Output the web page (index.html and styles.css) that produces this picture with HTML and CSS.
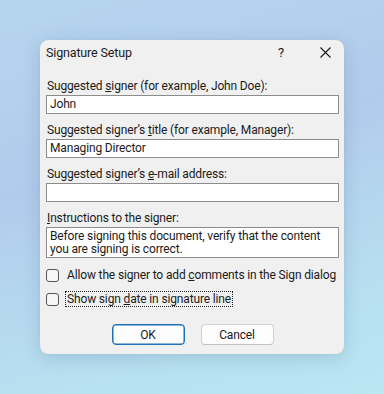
FILE: index.html
```html
<!DOCTYPE html>
<html lang="en">
<head>
<meta charset="utf-8">
<title>Signature Setup</title>
<link rel="stylesheet" href="styles.css">
</head>
<body>
<div class="stage">
  <div class="dialog">
    <div class="titlebar">
      <span class="title">Signature Setup</span>
      <span class="help">?</span>
      <span class="close">
        <svg width="11" height="11" viewBox="0 0 11 11"><path d="M0.5 0.5 L10.5 10.5 M10.5 0.5 L0.5 10.5" stroke="#1a1a1a" stroke-width="1.1" fill="none"/></svg>
      </span>
    </div>
    <div class="form">
      <div class="field">
        <div class="label">Suggested <u>s</u>igner (for example, John Doe):</div>
        <div class="input">John</div>
      </div>
      <div class="field">
        <div class="label">Suggested signer’s <u>t</u>itle (for example, Manager):</div>
        <div class="input">Managing Director</div>
      </div>
      <div class="field">
        <div class="label">Suggested signer’s <u>e</u>-mail address:</div>
        <div class="input"></div>
      </div>
      <div class="field">
        <div class="label"><u>I</u>nstructions to the signer:</div>
        <div class="input textarea">Before signing this document, verify that the content you are signing is correct.</div>
      </div>
      <div class="checks">
        <div class="check"><span class="box"></span><span class="ctext">Allow the signer to add <u>c</u>omments in the Sign dialog</span></div>
        <div class="check"><span class="box"></span><span class="ctext focus">Show sign <u>d</u>ate in signature line</span></div>
      </div>
      <div class="buttons">
        <div class="btn primary">OK</div>
        <div class="btn">Cancel</div>
      </div>
    </div>
  </div>
</div>
</body>
</html>
```
FILE: styles.css
```css
html, body {
  margin: 0;
  padding: 0;
}
body {
  width: 384px;
  height: 394px;
  overflow: hidden;
  font-family: Roboto, "Noto Sans", sans-serif;
  font-size: 12px;
  letter-spacing: -0.15px;
  color: #1b1b1b;
  background: linear-gradient(165deg, #b6d5ee 0%, #b1cbec 40%, #b7def0 75%, #b9e7f2 100%);
}
.stage {
  padding: 40px 0 0 40px;
}
.dialog {
  width: 304px;
  height: 314px;
  box-sizing: border-box;
  background: #f0f0f0;
  border-radius: 8px;
  box-shadow: 0 4px 18px rgba(40, 70, 110, 0.18), 0 0 1px rgba(0,0,0,0.15);
  padding: 0 5px 0 6px;
}
.titlebar {
  height: 24px;
  display: flex;
  align-items: center;
  font-size: 12.5px;
}
.title {
  flex: 1;
}
.help {
  width: 14px;
  margin-right: 28px;
  font-size: 13px;
}
.close {
  display: flex;
  margin-right: 8px;
}
.form {
  padding-top: 15px;
}
.field {
  display: flex;
  flex-direction: column;
  gap: 2px;
  margin-bottom: 9px;
}
.label {
  height: 14px;
  line-height: 14px;
  padding-left: 1px;
}
.input {
  height: 19px;
  box-sizing: border-box;
  border: 1px solid #8c8c8c;
  background: #fff;
  line-height: 17px;
  padding-left: 3px;
}
.textarea {
  height: 31px;
  line-height: 13px;
  padding-top: 2px;
  padding-right: 4px;
}
.checks {
  display: flex;
  flex-direction: column;
  gap: 8px;
  margin-top: 1px;
}
.check {
  display: flex;
  align-items: center;
  height: 16px;
}
.box {
  flex: 0 0 13px;
  width: 13px;
  height: 13px;
  box-sizing: border-box;
  border: 1px solid #555;
  border-radius: 3px;
  background: #f6f6f6;
  margin-right: 6px;
}
.ctext {
  line-height: 14px;
  padding: 0 1px;
  border: 1px dotted transparent;
  white-space: nowrap;
}
.ctext.focus {
  border-color: #222;
}
.buttons {
  display: flex;
  justify-content: center;
  gap: 16px;
  margin-top: 17px;
}
.btn {
  width: 73px;
  height: 21px;
  box-sizing: border-box;
  border: 1px solid #d0d0d0;
  border-bottom-color: #c0c0c0;
  border-radius: 4px;
  background: #fdfdfd;
  display: flex;
  align-items: center;
  justify-content: center;
}
.btn.primary {
  border-color: #1f6fb4;
  box-shadow: inset 0 0 0 0.5px #1f6fb4;
}
```
